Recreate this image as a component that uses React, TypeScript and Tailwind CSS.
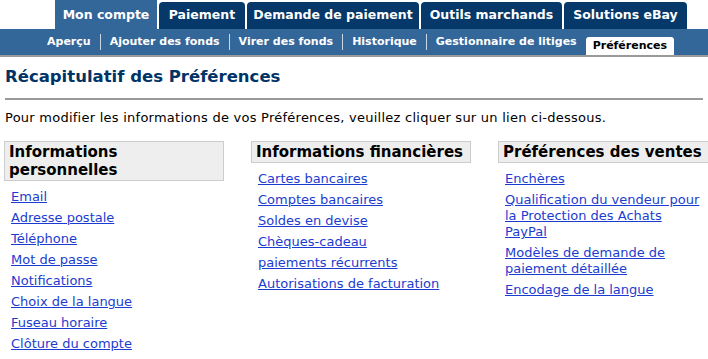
import React from 'react';

const tabs = [
  { label: 'Mon compte', w: 'w-[102px]' },
  { label: 'Paiement', w: 'w-[86px]' },
  { label: 'Demande de paiement', w: 'w-[172px]' },
  { label: 'Outils marchands', w: 'w-[141px]' },
  { label: 'Solutions eBay', w: 'w-[123px]' },
];
const subTabs = ['Aperçu', 'Ajouter des fonds', 'Virer des fonds', 'Historique', 'Gestionnaire de litiges'];

const columns: { title: string; links: string[] }[] = [
  {
    title: 'Informations personnelles',
    links: ['Email', 'Adresse postale', 'Téléphone', 'Mot de passe', 'Notifications', 'Choix de la langue', 'Fuseau horaire', 'Clôture du compte'],
  },
  {
    title: 'Informations financières',
    links: ['Cartes bancaires', 'Comptes bancaires', 'Soldes en devise', 'Chèques-cadeau', 'paiements récurrents', 'Autorisations de facturation'],
  },
  {
    title: 'Préférences des ventes',
    links: ['Enchères', 'Qualification du vendeur pour la Protection des Achats PayPal', 'Modèles de demande de paiement détaillée', 'Encodage de la langue'],
  },
];

const App: React.FC = () => {
  return (
    <div className="w-[708px] h-[359px] overflow-hidden bg-white font-['DejaVu_Sans',Verdana,sans-serif] text-black">
      {/* Main tabs */}
      <div className="flex items-end h-[29px] pl-[55px] gap-[2px]">
        {tabs.map((t, i) =>
          i === 0 ? (
            <div key={t.label} className={`${t.w} h-[29px] pt-[7px] bg-[#336699] text-white text-center font-bold text-[12.5px] leading-[16px] whitespace-nowrap`}>
              {t.label}
            </div>
          ) : (
            <div key={t.label} className={`${t.w} h-[27px] pt-[5px] rounded-t-[4px] bg-[#06386a] text-white text-center font-bold text-[12.5px] leading-[16px] whitespace-nowrap`}>
              {t.label}
            </div>
          )
        )}
      </div>

      {/* Sub navigation */}
      <div className="h-[28px] bg-[#336699] border-b-2 border-[#9a9a9a] flex items-end pl-[47px]">
        <div className="flex items-center h-[26px]">
          {subTabs.map((t, i) => (
            <React.Fragment key={t}>
              <span className="text-white font-bold text-[11px] leading-[14px] whitespace-nowrap">{t}</span>
              {i < subTabs.length - 1 && <span className="mx-[9px] w-px h-[16px] bg-[#c9d6e3]" />}
            </React.Fragment>
          ))}
        </div>
        <div className="ml-[9px] h-[18px] px-[7px] bg-white rounded-t-[3px] text-black font-bold text-[11px] leading-[18px] whitespace-nowrap">
          Préférences
        </div>
      </div>

      {/* Page title */}
      <div className="px-[5px] pt-[9px]">
        <h1 className="text-[#003366] font-bold text-[16.5px] leading-[22px]">Récapitulatif des Préférences</h1>
        <div className="mt-[10px] h-[2px] bg-[#999999]" />
        <p className="mt-[10px] text-[13px] leading-[16px] tracking-[0.25px]">
          Pour modifier les informations de vos Préférences, veuillez cliquer sur un lien ci-dessous.
        </p>
      </div>

      {/* Columns */}
      <div className="mt-[15px] pl-[4px] grid grid-cols-[220px_220px_220px] gap-x-[27px]">
        {columns.map((c) => (
          <div key={c.title}>
            <div className="border border-[#cccccc] bg-[#eeeeee] px-[4px] py-[1px] font-bold text-[15px] leading-[18px] whitespace-nowrap">
              {c.title === 'Informations personnelles' ? (
                <>
                  Informations
                  <br />
                  personnelles
                </>
              ) : (
                c.title
              )}
            </div>
            <ul className="mt-[8px] pl-[7px] w-[206px]">
              {c.links.map((l) => (
                <li key={l} className="mb-[5px] text-[13px] leading-[16px]">
                  <a href="#" className="text-[#1c3ccf] underline">
                    {l}
                  </a>
                </li>
              ))}
            </ul>
          </div>
        ))}
      </div>
    </div>
  );
};

export default App;
